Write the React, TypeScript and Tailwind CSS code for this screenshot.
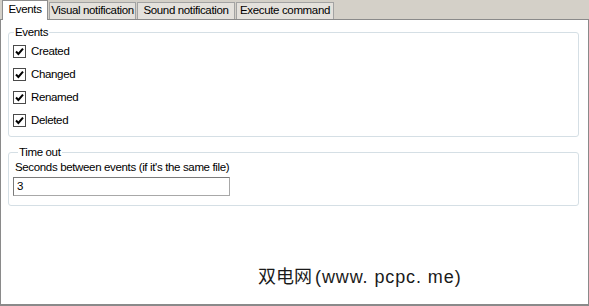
import React from "react";

const font = { fontFamily: '"Liberation Sans", Arial, sans-serif' };

function CheckBox({ label }: { label: string }) {
  return (
    <div className="flex h-[23px] items-center gap-[5px] pl-[4px]">
      <span className="flex h-[13px] w-[13px] items-center justify-center border border-[#4a4a4a] bg-white">
        <svg width="9" height="9" viewBox="0 0 9 9">
          <path d="M1 4.5 L3.4 7 L8 1.6" fill="none" stroke="#000" strokeWidth="2" />
        </svg>
      </span>
      <span>{label}</span>
    </div>
  );
}

function GroupBox({ title, className, children }: { title: string; className?: string; children: React.ReactNode }) {
  return (
    <fieldset className={`rounded-[3px] border border-[#d5dfe5] ${className ?? ""}`}>
      <legend className="ml-[5px] px-[1px] leading-[12px]">{title}</legend>
      {children}
    </fieldset>
  );
}

export default function App() {
  const tabs = [
    { name: "Visual notification", w: "w-[87px]" },
    { name: "Sound notification", w: "w-[98px]" },
    { name: "Execute command", w: "w-[98px]" },
  ];

  return (
    <div
      className="relative flex h-[306px] w-[589px] flex-col bg-[#d4d0c8] text-[11.5px] tracking-[-0.35px] text-black"
      style={font}
    >
      <div className="flex h-[20px] items-end pl-[2px]">
        <div className="relative z-10 flex h-[20px] w-[46px] items-center justify-center border border-b-0 border-[#8e8e8e] bg-white pb-[2px]">
          Events
        </div>
        {tabs.map((t) => (
          <div
            key={t.name}
            className={`ml-px flex h-[18px] ${t.w} items-center justify-center border border-b-0 border-[#a3a3a3] bg-[#e4e1dc] pb-px`}
          >
            {t.name}
          </div>
        ))}
      </div>

      <div className="-mt-px flex flex-1 flex-col border-x border-t border-b-2 border-[#8a8a8a] bg-white pl-[7px] pr-[9px] pt-[6px]">
        <GroupBox title="Events" className="pb-[4px] pt-[2px]">
          <CheckBox label="Created" />
          <CheckBox label="Changed" />
          <CheckBox label="Renamed" />
          <CheckBox label="Deleted" />
        </GroupBox>

        <GroupBox title="Time out" className="mt-[9px] pb-[9px] pl-[4px] pt-[3px]">
          <div className="pl-[2px] leading-[13px]">Seconds between events (if it's the same file)</div>
          <div className="mt-[3px] flex h-[19px] w-[217px] items-center border border-[#7a7a7a] border-b-[#a8a8a8] border-r-[#a8a8a8] pl-[3px]">
            3
          </div>
        </GroupBox>
      </div>

      <div
        className="absolute left-[258px] top-[262px] flex items-baseline text-[18px] tracking-normal text-[#1a1a1a]"
        style={{ fontFamily: '"Noto Sans CJK SC", sans-serif' }}
      >
        <span>双电网</span>
        <span className="ml-[3px] tracking-[0.9px]" style={font}>
          (www. pcpc. me)
        </span>
      </div>
    </div>
  );
}
